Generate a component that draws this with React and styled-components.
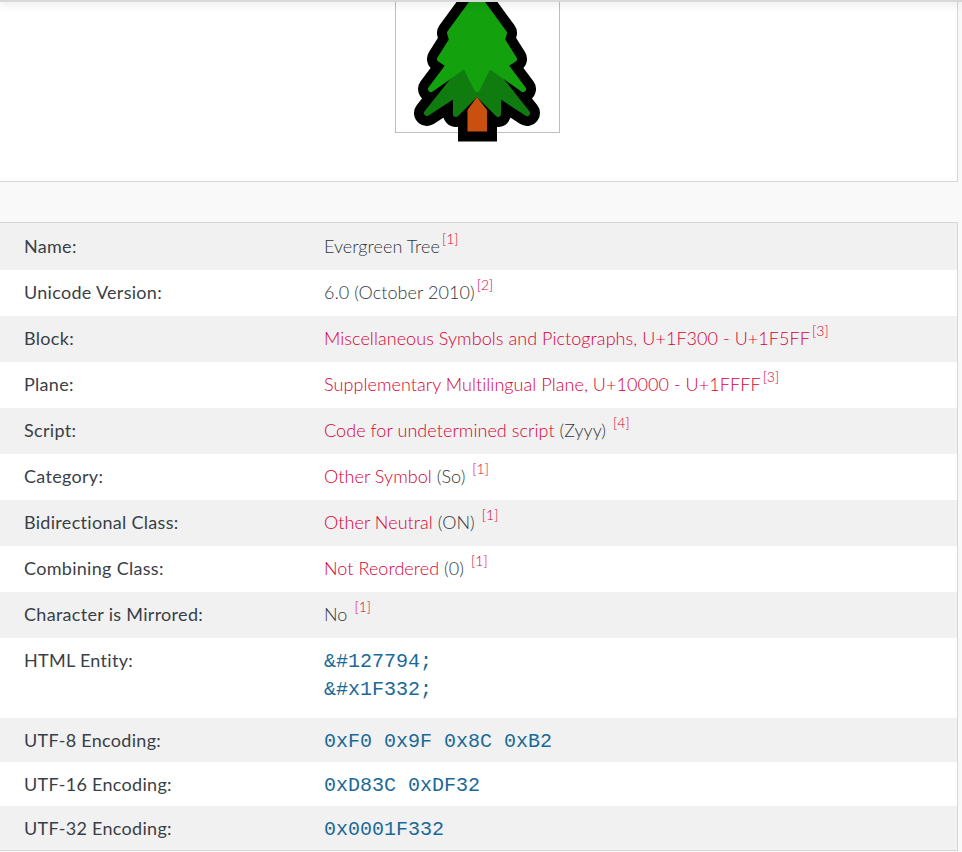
import React from 'react';
import styled, {createGlobalStyle} from 'styled-components';

const GlobalStyle = createGlobalStyle`
    html, body {
        margin: 0;
        padding: 0;
        background: #f9f9f9;
        font-family: "Lato", "Liberation Sans", sans-serif;
    }
`;

const TopBar = styled.div`
    position: fixed;
    top: 0;
    left: 0;
    right: 0;
    height: 2px;
    background: #d8d8d8;
    box-shadow: 0 1px 8px rgba(0, 0, 0, 0.25);
    z-index: 5;
`;

const PictureCard = styled.section`
    width: 957px;
    height: 181px;
    background: #fff;
    border-right: 1px solid #d6d6d6;
    border-bottom: 1px solid #d6d6d6;
    display: flex;
    justify-content: center;
`;

const PictureBox = styled.div`
    position: relative;
    width: 163px;
    height: 132px;
    margin-right: 2px;
    border: 1px solid #bdbdbd;
    border-top: none;
`;

const TreeSvg = styled.svg`
    position: absolute;
    left: -16px;
    top: 0;
`;

const InfoTable = styled.section`
    width: 957px;
    margin-top: 40px;
    border-top: 1px solid #d6d6d6;
    border-right: 1px solid #d6d6d6;
    border-bottom: 1px solid #d6d6d6;
    background: #fff;
`;

const Row = styled.div`
    display: grid;
    grid-template-columns: 300px 1fr;
    padding: 0 24px 2px;
    height: 46px;
    align-items: center;
    box-sizing: border-box;
    font-size: 18px;
    color: #3a3f47;
    &:nth-child(odd) { background: #f1f1f1; }
    &:first-child { height: 47px; }
`;

const CodeRow = styled(Row)`
    height: ${props => props.$tall ? '80px' : '44px'};
    padding-bottom: 0;
    padding-top: ${props => props.$tall ? '11px' : '0'};
    align-items: ${props => props.$tall ? 'start' : 'center'};
`;

const Label = styled.div`
    font-weight: 400;
    letter-spacing: 0.3px;
`;

const Value = styled.div`
    font-weight: 300;
    letter-spacing: 0.06px;
    color: #33383e;
`;

const Link = styled.span`
    color: #d80036;
`;

const Ref = styled.sup`
    font-size: 14px;
    line-height: 0;
    color: #d80036;
    vertical-align: 9px;
    margin-left: 2px;
`;

const Code = styled.div`
    font-family: "Liberation Mono", monospace;
    font-size: 20px;
    line-height: 28px;
    color: #1a6a99;
    margin-top: ${props => props.$tall ? '-1px' : '4px'};
`;

const rows = [
    {label: 'Name:', value: <>Evergreen Tree<Ref>[1]</Ref></>},
    {label: 'Unicode Version:', value: <>6.0 (October 2010)<Ref>[2]</Ref></>},
    {label: 'Block:', value: <><Link>Miscellaneous Symbols and Pictographs, U+1F300 - U+1F5FF</Link><Ref>[3]</Ref></>},
    {label: 'Plane:', value: <><Link>Supplementary Multilingual Plane, U+10000 - U+1FFFF</Link><Ref>[3]</Ref></>},
    {label: 'Script:', value: <><Link>Code for undetermined script</Link> (Zyyy) <Ref>[4]</Ref></>},
    {label: 'Category:', value: <><Link>Other Symbol</Link> (So) <Ref>[1]</Ref></>},
    {label: 'Bidirectional Class:', value: <><Link>Other Neutral</Link> (ON) <Ref>[1]</Ref></>},
    {label: 'Combining Class:', value: <><Link>Not Reordered</Link> (0) <Ref>[1]</Ref></>},
    {label: 'Character is Mirrored:', value: <>No <Ref>[1]</Ref></>},
];

const codeRows = [
    {label: 'HTML Entity:', lines: ['&#127794;', '&#x1F332;']},
    {label: 'UTF-8 Encoding:', lines: ['0xF0 0x9F 0x8C 0xB2']},
    {label: 'UTF-16 Encoding:', lines: ['0xD83C 0xDF32']},
    {label: 'UTF-32 Encoding:', lines: ['0x0001F332']},
];

const upperTree = 'M97 -4L124 33L122 40L134 59L125 65L143 89L109 65L97 89L85 65L51 89L69 65L60 59L72 40L70 33Z';
const lowerTree = 'M97 50L47 113L76 94V114L97 93L118 114V94L147 113Z';

// coordinates are page px minus (380, 0), read off the zoomed reference
const Tree = () => (
    <TreeSvg viewBox="0 0 200 150" width="200" height="150">
        <path d="M78 141.5H117V110H78Z" fill="#000" />
        <path d={upperTree} fill="#000" stroke="#000" strokeWidth="26" strokeLinejoin="round" />
        <path d={lowerTree} fill="#000" stroke="#000" strokeWidth="26" strokeLinejoin="round" />
        <path d={lowerTree} fill="#107c10" stroke="#107c10" strokeWidth="6" strokeLinejoin="round" />
        <path d={upperTree} fill="#13a10e" stroke="#13a10e" strokeWidth="6" strokeLinejoin="round" />
        <path d="M87.5 110L97 97L107 110V131.5H87.5Z" fill="#ca5010" />
    </TreeSvg>
);

const App = () => {
    return (
        <React.Fragment>
            <GlobalStyle />
            <TopBar />
            <PictureCard>
                <PictureBox>
                    <Tree />
                </PictureBox>
            </PictureCard>
            <InfoTable>
                {rows.map((row) => (
                    <Row key={row.label}>
                        <Label>{row.label}</Label>
                        <Value>{row.value}</Value>
                    </Row>
                ))}
                {codeRows.map((row) => (
                    <CodeRow key={row.label} $tall={row.lines.length > 1}>
                        <Label>{row.label}</Label>
                        <Code $tall={row.lines.length > 1}>
                            {row.lines.map((line) => <div key={line}>{line}</div>)}
                        </Code>
                    </CodeRow>
                ))}
            </InfoTable>
        </React.Fragment>
    );
};

export default App;
